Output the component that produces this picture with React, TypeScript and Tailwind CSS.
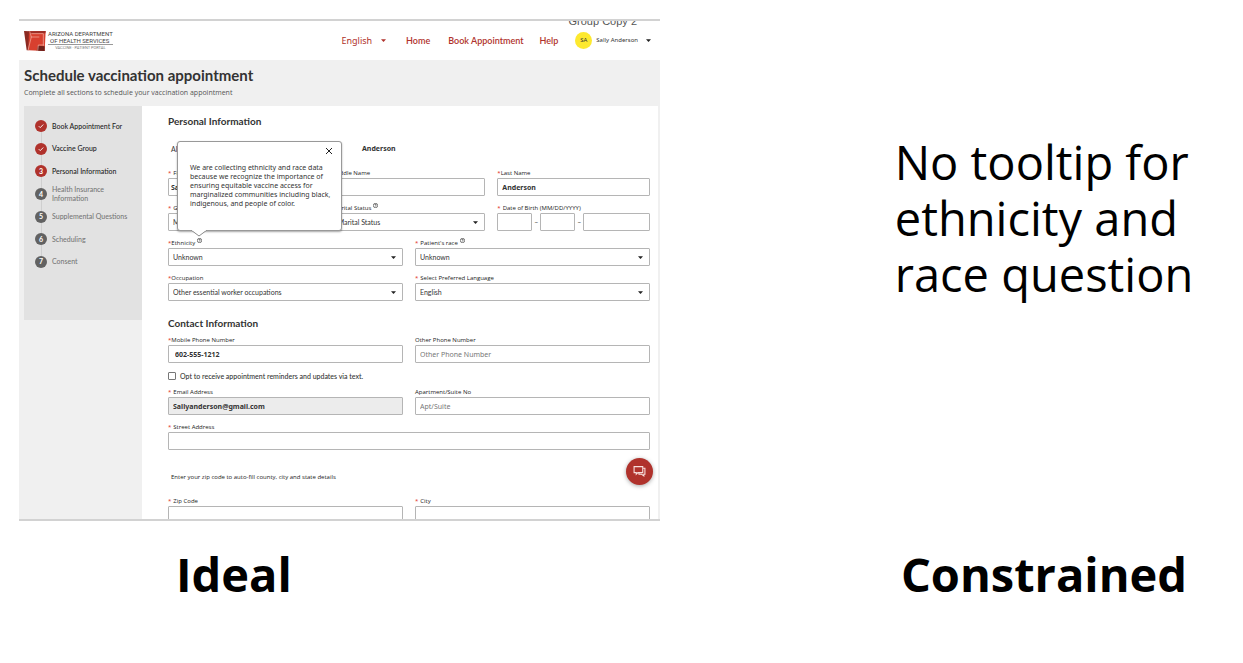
import React, { useId } from "react";

const LABEL = "flex h-[11px] items-center whitespace-nowrap pt-px font-['Open_Sans'] text-[6px] leading-[10px] font-medium text-[#222]";
const BOX = "block h-[18px] w-full rounded-[1px] border border-[#b5b5b5] px-1 text-[7px] leading-4 text-[#333] placeholder:text-[#777] outline-none";

function HelpIcon() {
  return (
    <svg viewBox="0 0 12 12" className="mb-[5px] ml-0.5 size-[5px]" fill="none" stroke="#333" strokeWidth="1.6">
      <circle cx="6" cy="6" r="5.2" />
      <path d="M4.2 4.8c0-2.2 3.6-2.2 3.6 0 0 1.2-1.8 1.2-1.8 2.4M6 8.4v1" />
    </svg>
  );
}

function Caret({ className = "" }: { className?: string }) {
  return (
    <svg viewBox="0 0 10 6" className={"h-[3px] w-[5px] " + className} fill="currentColor">
      <path d="M0 0.5h10L5 6z" />
    </svg>
  );
}

type FieldLabelProps = { id: string; text: string; required?: boolean; spaced?: boolean; help?: boolean };

function FieldLabel({ id, text, required, spaced, help }: FieldLabelProps) {
  return (
    <label htmlFor={id} className={LABEL}>
      {required && <span className={spaced ? "mr-0.5 text-[#e02b20]" : "text-[#e02b20]"}>*</span>}
      {text}
      {help && <HelpIcon />}
    </label>
  );
}

type FieldProps = Omit<FieldLabelProps, "id"> & {
  value?: string;
  placeholder?: string;
  inputClass?: string;
  className?: string;
};

function TextField({ value, placeholder, inputClass = "bg-white", className = "", ...label }: FieldProps) {
  const id = useId();
  return (
    <div className={className}>
      <FieldLabel id={id} {...label} />
      <input id={id} defaultValue={value} placeholder={placeholder} className={BOX + " " + inputClass} />
    </div>
  );
}

function SelectField({ value, className = "", children, ...label }: FieldProps & { children?: React.ReactNode }) {
  const id = useId();
  return (
    <div className={"relative " + className}>
      <FieldLabel id={id} {...label} />
      <div className="relative">
        <select id={id} className={BOX + " appearance-none bg-white"}>
          <option>{value}</option>
        </select>
        <Caret className="pointer-events-none absolute top-2 right-[7px] text-[#222]" />
      </div>
      {children}
    </div>
  );
}

function Tooltip() {
  return (
    <div
      role="tooltip"
      className="absolute -top-[96px] left-[9px] z-10 h-[90px] w-[165px] rounded-[3px] border border-[#999] bg-white px-3 pt-[21px] font-['Noto_Sans'] shadow-[0_1px_2px_rgba(0,0,0,0.35)]"
    >
      <button aria-label="Close" className="absolute top-[5px] right-2">
        <svg viewBox="0 0 8 8" className="size-2" stroke="#222" strokeWidth="1" fill="none">
          <path d="M1 1l6 6M7 1L1 7" />
        </svg>
      </button>
      <p className="text-[7px] leading-[9px] whitespace-nowrap text-[#333]">
        We are collecting ethnicity and race data
        <br />
        because we recognize the importance of
        <br />
        ensuring equitable vaccine access for
        <br />
        marginalized communities including black,
        <br />
        indigenous, and people of color.
      </p>
      <svg viewBox="0 0 16 7" className="absolute top-[88px] left-[13px] h-[7px] w-4">
        <path d="M0 0L8 6L16 0" fill="#fff" stroke="#8a8a8a" strokeWidth="1" />
        <path d="M1 0h14" stroke="#fff" strokeWidth="1" />
      </svg>
    </div>
  );
}

function BirthDate() {
  return (
    <fieldset>
      <legend className={LABEL}>
        <span className="mr-0.5 text-[#e02b20]">*</span>Date of Birth (MM/DD/YYYY)
      </legend>
      <div className="grid grid-cols-[35fr_8px_35fr_8px_67fr] items-center text-center text-[7px] text-[#444]">
        <input aria-label="Month" className={BOX} />
        <span>–</span>
        <input aria-label="Day" className={BOX} />
        <span>–</span>
        <input aria-label="Year" className={BOX} />
      </div>
    </fieldset>
  );
}

function Logo() {
  return (
    <a href="#" className="flex items-center gap-0.5 text-[#444]">
      <svg viewBox="0 0 66 60" className="h-5 w-[22px]">
        <path d="M0 0L18 1L16 24L14 58L8 58z" fill="#8c2a22" />
        <path d="M15 1L65 0L62 60L13 58z" fill="#d8402f" />
        <path d="M14 1L65 0L64 7H14z" fill="#9c2e26" />
        <path d="M42 44L62 46V60L38 59z" fill="#6e211b" />
        <path d="M17 1L22 18L12 58M20 18H46M22 8H58V44M41 60L43 42H60" fill="none" stroke="#f3b5a8" strokeWidth="2" />
      </svg>
      <span className="block font-['Roboto'] whitespace-nowrap">
        <span className="block border-b border-[#999] text-[6px] leading-[7px]">
          ARIZONA DEPARTMENT
          <br />
          <span className="pl-0.5">OF HEALTH SERVICES</span>
        </span>
        <span className="block text-center text-[4px] leading-[6px] text-[#777]">VACCINE · PATIENT PORTAL</span>
      </span>
    </a>
  );
}

function TopBar() {
  return (
    <header className="flex h-[39px] shrink-0 items-center justify-between bg-white pr-[9px] pl-[5px]">
      <Logo />
      <nav className="flex items-center text-[9px] font-semibold text-[#b0322c]">
        <button className="flex items-center gap-[9px] font-['Noto_Sans'] font-normal">
          English
          <Caret />
        </button>
        <a href="#" className="ml-5">Home</a>
        <a href="#" className="ml-[18px]">Book Appointment</a>
        <a href="#" className="ml-4">Help</a>
        <button className="ml-[17px] flex items-center font-['Noto_Sans'] text-[6px] font-normal text-[#333]">
          <span className="mr-1 flex size-[17px] items-center justify-center rounded-full bg-[#fde92f]">SA</span>
          Sally Anderson
          <Caret className="ml-2 text-[#222]" />
        </button>
      </nav>
    </header>
  );
}

const STEPS = [
  { name: "Book Appointment For", state: "done" },
  { name: "Vaccine Group", state: "done" },
  { name: "Personal Information", state: "current" },
  { name: "Health Insurance Information", state: "next" },
  { name: "Supplemental Questions", state: "next" },
  { name: "Scheduling", state: "next" },
  { name: "Consent", state: "next" },
];

function Steps() {
  return (
    <aside className="h-[214px] w-[118px] shrink-0 bg-[#e2e2e2] pt-[9px] pl-[11px]">
      <ol className="relative grid h-[158px] grid-rows-7">
        <li aria-hidden="true" className="absolute top-3 bottom-3 left-[6px] w-px bg-[#cfcfcf]" />
        {STEPS.map((step, i) => (
          <li key={step.name} className="relative flex items-center gap-[5px]">
            <span
              className={
                "flex size-3 shrink-0 items-center justify-center rounded-full text-[7px] font-bold text-white " +
                (step.state === "next" ? "bg-[#626262]" : "bg-[#b0322c]")
              }
            >
              {step.state === "done" ? (
                <svg viewBox="0 0 8 8" className="size-[6px]" fill="none" stroke="#fff" strokeWidth="1.2">
                  <path d="M1 4.2l2 2L7 2" />
                </svg>
              ) : (
                i + 1
              )}
            </span>
            <span
              className={
                "text-[7px] leading-[9px] font-medium " +
                (step.state === "next" ? "text-[#777]" : "text-[#222]") +
                (i === 3 ? " w-[60px]" : " whitespace-nowrap")
              }
            >
              {step.name}
            </span>
          </li>
        ))}
      </ol>
    </aside>
  );
}

function PatientForm() {
  const optId = useId();
  return (
    <form className="min-w-0 flex-1 bg-white pt-2 pr-2 pl-[26px] text-[#333]">
      <h2 className="text-[10px] leading-[14px] font-bold">Personal Information</h2>
      <div className="mt-[15px] grid h-3 grid-cols-[191fr_291fr] items-center text-[7px]">
        <span className="pl-[3px]">Al</span>
        <span className="pl-[3px] font-['Noto_Sans'] font-bold">Anderson</span>
      </div>
      <div className="mt-3 grid grid-cols-6 gap-x-3 gap-y-[6px]">
        <TextField className="col-span-2" text="First Name" required spaced value="Sally" inputClass="bg-white font-['Noto_Sans'] font-bold px-[2px]" />
        <TextField className="col-span-2" text="Middle Name" />
        <TextField className="col-span-2" text="Last Name" required value="Anderson" inputClass="bg-white font-['Noto_Sans'] font-bold" />
        <SelectField className="col-span-2" text="Gender" required spaced value="Male" />
        <SelectField className="col-span-2" text="Marital Status" help value="Marital Status" />
        <div className="col-span-2">
          <BirthDate />
        </div>
        <SelectField className="col-span-3" text="Ethnicity" required help value="Unknown">
          <Tooltip />
        </SelectField>
        <SelectField className="col-span-3" text="Patient's race" required spaced help value="Unknown" />
        <SelectField className="col-span-3" text="Occupation" required value="Other essential worker occupations" />
        <SelectField className="col-span-3" text="Select Preferred Language" required spaced value="English" />
      </div>

      <h2 className="mt-[15px] text-[10px] leading-[14px] font-bold">Contact Information</h2>
      <div className="mt-1 grid grid-cols-2 gap-x-3">
        <TextField text="Mobile Phone Number" required value="602-555-1212" inputClass="bg-white font-bold font-['Noto_Sans'] px-[6px]" />
        <TextField text="Other Phone Number" placeholder="Other Phone Number" inputClass="bg-white font-['Noto_Sans']" />
      </div>
      <div className="mt-[7px] flex h-3 items-center gap-1">
        <input id={optId} type="checkbox" className="size-2 appearance-none rounded-[1px] border border-[#777] bg-white" />
        <label htmlFor={optId} className="text-[7px] font-medium">Opt to receive appointment reminders and updates via text.</label>
      </div>
      <div className="mt-1 grid grid-cols-2 gap-x-3 gap-y-[6px]">
        <TextField text="Email Address" required spaced value="Sallyanderson@gmail.com" inputClass="font-bold font-['Noto_Sans'] bg-[#ececec]" />
        <TextField text="Apartment/Suite No" placeholder="Apt/Suite" inputClass="bg-white font-['Noto_Sans']" />
        <TextField className="col-span-2" text="Street Address" required spaced />
      </div>
      <p className="mt-[21px] pl-[3px] font-['Open_Sans'] text-[6px] leading-3 font-medium text-[#222]">Enter your zip code to auto-fill county, city and state details</p>
      <div className="mt-3 grid grid-cols-2 gap-x-3">
        <TextField text="Zip Code" required spaced />
        <TextField text="City" required spaced />
      </div>
    </form>
  );
}

function Portal() {
  return (
    <div className="relative flex aspect-[641/502] w-full flex-col overflow-hidden border-y-2 border-[#d2d2d2] bg-[#f0f0f0] font-['Lato',sans-serif]">
      <TopBar />
      <span className="absolute -top-[6px] right-[23px] font-['Liberation_Sans'] text-[11px] leading-3 text-[#555]">Group Copy 2</span>
      <div className="px-[5px] pt-[6px] text-[#333]">
        <h1 className="text-[15px] leading-[18px] font-bold">Schedule vaccination appointment</h1>
        <p className="mt-1 font-['Open_Sans'] text-[7px] leading-[10px] text-[#555]">Complete all sections to schedule your vaccination appointment</p>
      </div>
      <div className="mt-2 flex min-h-0 flex-1 items-start pr-[2px] pl-[5px]">
        <Steps />
        <PatientForm />
      </div>
      <button
        aria-label="Open chat"
        className="absolute right-[7px] bottom-[34px] z-20 flex size-[27px] items-center justify-center rounded-full bg-[#b0322c] shadow-[0_1px_4px_rgba(0,0,0,0.35)]"
      >
        <svg viewBox="0 0 24 24" className="size-[13px]" fill="none" stroke="#f7dedc" strokeWidth="2">
          <path d="M2 3h16v11H9l-3 3v-3H2zM18 6h4v11h-2v3l-4-3h-5v-3" />
        </svg>
      </button>
    </div>
  );
}

export default function App() {
  return (
    <main className="min-h-screen bg-white pt-[19px] pl-[19px] font-['Open_Sans',sans-serif] text-black">
      <div className="grid grid-cols-[641fr_185fr_398fr]">
        <Portal />
        <p className="col-start-3 justify-self-center pt-[115px] text-[47px] leading-[56px] whitespace-nowrap">
          No tooltip for
          <br />
          ethnicity and
          <br />
          race question
        </p>
        <h2 className="pt-[25px] pl-[157px] text-[47px] leading-[56px] font-bold">Ideal</h2>
        <h2 className="col-start-3 justify-self-center pt-[25px] text-[47px] leading-[56px] font-bold">Constrained</h2>
      </div>
    </main>
  );
}
